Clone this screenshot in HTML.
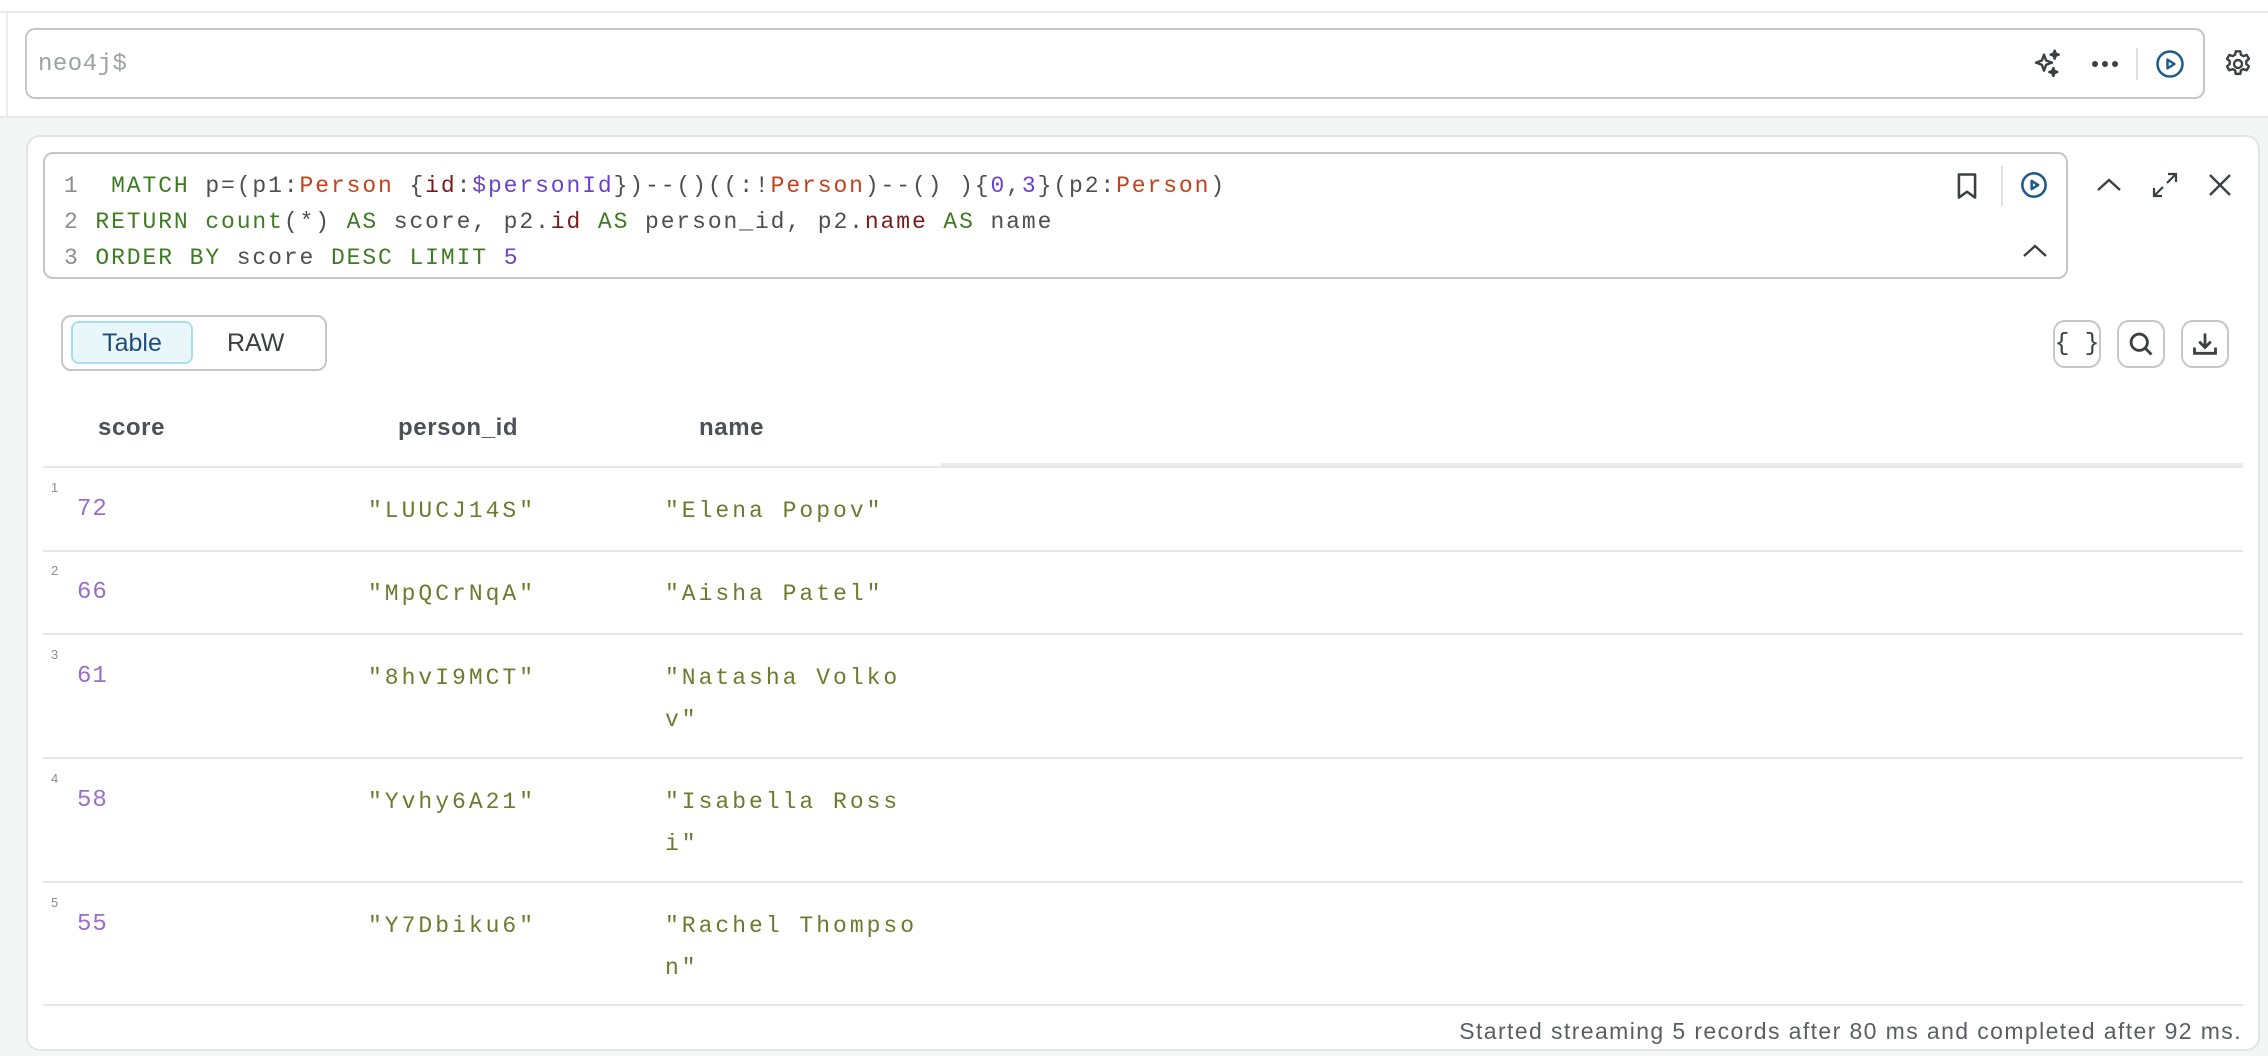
<!DOCTYPE html>
<html><head><meta charset="utf-8"><style>
*{margin:0;padding:0;box-sizing:border-box}
body{width:2268px;height:1056px;background:#fff;position:relative;overflow:hidden;font-family:"Liberation Sans",sans-serif}
.a{position:absolute}
.mono{font-family:"Liberation Mono",monospace}
.code{font-size:23px;letter-spacing:1.9px;white-space:pre;color:#4d4f53}
.k{color:#3f7a24}.l{color:#c2421c}.p{color:#7a1b1b}.v{color:#6a44c6}
.hd{font-size:24px;font-weight:bold;color:#4d5157;letter-spacing:0.6px}
.cell{font-size:23px;letter-spacing:3px;color:#6b7c2e;white-space:pre;line-height:42px}
.num{font-size:24px;letter-spacing:1px;color:#9a6fc4}
.idx{font-size:13px;color:#8a8d91}
.hr{height:2px;background:#e6e7e8}
.ib{width:48px;height:48px;border:2px solid #c4c6c9;border-radius:12px;background:#fff}
svg{position:absolute}
</style></head><body>
<div class="a" style="left:0;top:11px;width:2268px;height:2px;background:#e8e9ea"></div>
<div class="a" style="left:6px;top:13px;width:2px;height:103px;background:#ececec"></div>
<div class="a" style="left:0;top:116px;width:2268px;height:940px;background:#f4f5f5;border-top:2px solid #e8e9ea"></div>
<!-- top editor -->
<div class="a" style="left:25px;top:28px;width:2180px;height:71px;border:2px solid #c4c6c9;border-radius:10px;background:#fff"></div>
<div class="a mono" style="left:38px;top:51px;font-size:24px;letter-spacing:0.5px;color:#9ea1a5">neo4j$</div>
<svg style="left:2032px;top:48px" width="32" height="32" viewBox="0 0 24 24" fill="none" stroke="#3c4045" stroke-width="1.8" stroke-linejoin="round"><path d="M9 5l1.6 4.4L15 11l-4.4 1.6L9 17l-1.6-4.4L3 11l4.4-1.6z"/><path d="M17 2l.8 2.2L20 5l-2.2.8L17 8l-.8-2.2L14 5l2.2-.8z" fill="#3c4045"/><path d="M16 15l.8 2.2 2.2.8-2.2.8L16 21l-.8-2.2L13 18l2.2-.8z" fill="#3c4045"/></svg>
<div class="a" style="left:2092px;top:61px;width:6px;height:6px;border-radius:3px;background:#3c4045;box-shadow:10px 0 #3c4045,20px 0 #3c4045"></div>
<div class="a" style="left:2136px;top:48px;width:2px;height:32px;background:#e0e1e3"></div>
<svg style="left:2155px;top:49px" width="30" height="30" viewBox="0 0 24 24" fill="none" stroke="#1f5a8c" stroke-width="2"><circle cx="12" cy="12" r="10"/><path d="M10 8.5v7l5.5-3.5z" stroke-linejoin="round"/></svg>
<svg style="left:2222px;top:48px" width="32" height="32" viewBox="0 0 24 24" fill="none" stroke="#3c4045" stroke-width="1.8"><circle cx="12" cy="12" r="3"/><path d="M10.3 2.5h3.4l.5 2.6 1.8 1 2.5-.9 1.7 2.9-2 1.8v2.1l2 1.8-1.7 2.9-2.5-.9-1.8 1-.5 2.6h-3.4l-.5-2.6-1.8-1-2.5.9-1.7-2.9 2-1.8v-2.1l-2-1.8 1.7-2.9 2.5.9 1.8-1z" stroke-linejoin="round"/></svg>
<!-- card -->
<div class="a" style="left:26px;top:135px;width:2234px;height:916px;border:2px solid #e3e4e5;border-radius:14px;background:#fff"></div>
<div class="a" style="left:43px;top:152px;width:2025px;height:127px;border:2px solid #c4c6c9;border-radius:10px;background:#fff"></div>
<div class="a mono code" style="left:64px;top:168px;line-height:36px"><span style="color:#8a8d91">1</span>  <span class="k">MATCH</span> p=(p1:<span class="l">Person</span> {<span class="p">id</span>:<span class="v">$personId</span>})--()((:!<span class="l">Person</span>)--() ){<span class="v">0</span>,<span class="v">3</span>}(p2:<span class="l">Person</span>)
<span style="color:#8a8d91">2</span> <span class="k">RETURN</span> <span class="k">count</span>(*) <span class="k">AS</span> score, p2.<span class="p">id</span> <span class="k">AS</span> person_id, p2.<span class="p">name</span> <span class="k">AS</span> name
<span style="color:#8a8d91">3</span> <span class="k">ORDER BY</span> score <span class="k">DESC LIMIT</span> <span class="v">5</span></div>
<svg style="left:1953px;top:171px" width="28" height="30" viewBox="0 0 24 26" fill="none" stroke="#3c4045" stroke-width="2.2" stroke-linejoin="round"><path d="M5 3h14v20l-7-5-7 5z"/></svg>
<div class="a" style="left:2001px;top:166px;width:2px;height:40px;background:#e0e1e3"></div>
<svg style="left:2020px;top:171px" width="28" height="28" viewBox="0 0 24 24" fill="none" stroke="#1f5a8c" stroke-width="2.2"><circle cx="12" cy="12" r="10"/><path d="M10 8.5v7l5.5-3.5z" stroke-linejoin="round"/></svg>
<svg style="left:2022px;top:242px" width="26" height="18" viewBox="0 0 26 18" fill="none" stroke="#3c4045" stroke-width="2.4"><path d="M2 14L13 4l11 10"/></svg>
<svg style="left:2096px;top:176px" width="26" height="18" viewBox="0 0 26 18" fill="none" stroke="#3c4045" stroke-width="2.4"><path d="M2 14L13 4l11 10"/></svg>
<svg style="left:2150px;top:170px" width="30" height="30" viewBox="0 0 30 30" fill="none" stroke="#3c4045" stroke-width="2.2"><path d="M18 4h8v8M26 4L17 13M12 26H4v-8M4 26l9-9"/></svg>
<svg style="left:2207px;top:172px" width="26" height="26" viewBox="0 0 26 26" fill="none" stroke="#3c4045" stroke-width="2.4"><path d="M3 3l20 20M23 3L3 23"/></svg>
<!-- toggle -->
<div class="a" style="left:61px;top:315px;width:266px;height:56px;border:2px solid #c4c6c9;border-radius:10px"></div>
<div class="a" style="left:71px;top:321px;width:122px;height:43px;border:2px solid #a6e0ea;border-radius:8px;background:#e9f7fa"></div>
<div class="a" style="left:71px;top:329px;width:122px;text-align:center;font-size:25px;color:#1f4e7a">Table</div>
<div class="a" style="left:227px;top:329px;font-size:25px;color:#3c4045">RAW</div>
<div class="a ib" style="left:2053px;top:320px"></div>
<div class="a mono" style="left:2053px;top:329px;width:48px;text-align:center;font-size:25px;color:#3c4045">{ }</div>
<div class="a ib" style="left:2117px;top:320px"></div>
<svg style="left:2127px;top:330px" width="28" height="28" viewBox="0 0 24 24" fill="none" stroke="#3c4045" stroke-width="2.4"><circle cx="10.5" cy="10.5" r="7"/><path d="M15.5 15.5L21 21"/></svg>
<div class="a ib" style="left:2181px;top:320px"></div>
<svg style="left:2191px;top:330px" width="28" height="28" viewBox="0 0 24 24" fill="none" stroke="#3c4045" stroke-width="2.4"><path d="M12 3v12M7 10l5 5 5-5M3 15v5h18v-5"/></svg>
<!-- table -->
<div class="a hd" style="left:98px;top:414px">score</div>
<div class="a hd" style="left:398px;top:414px">person_id</div>
<div class="a hd" style="left:699px;top:414px">name</div>
<div class="a hr" style="left:43px;top:466px;width:2200px"></div>
<div class="a" style="left:941px;top:463px;width:1302px;height:3px;background:#ececec"></div>
<div class="a hr" style="left:43px;top:550px;width:2200px"></div>
<div class="a hr" style="left:43px;top:633px;width:2200px"></div>
<div class="a hr" style="left:43px;top:757px;width:2200px"></div>
<div class="a hr" style="left:43px;top:881px;width:2200px"></div>
<div class="a hr" style="left:43px;top:1004px;width:2200px"></div>

<div class="a idx" style="left:51px;top:480px">1</div><div class="a mono num" style="left:77px;top:496px">72</div>
<div class="a mono cell" style="left:368px;top:490px">"LUUCJ14S"</div><div class="a mono cell" style="left:665px;top:490px">"Elena Popov"</div>
<div class="a idx" style="left:51px;top:563px">2</div><div class="a mono num" style="left:77px;top:579px">66</div>
<div class="a mono cell" style="left:368px;top:573px">"MpQCrNqA"</div><div class="a mono cell" style="left:665px;top:573px">"Aisha Patel"</div>
<div class="a idx" style="left:51px;top:647px">3</div><div class="a mono num" style="left:77px;top:663px">61</div>
<div class="a mono cell" style="left:368px;top:657px">"8hvI9MCT"</div><div class="a mono cell" style="left:665px;top:657px">"Natasha Volko
v"</div>
<div class="a idx" style="left:51px;top:771px">4</div><div class="a mono num" style="left:77px;top:787px">58</div>
<div class="a mono cell" style="left:368px;top:781px">"Yvhy6A21"</div><div class="a mono cell" style="left:665px;top:781px">"Isabella Ross
i"</div>
<div class="a idx" style="left:51px;top:895px">5</div><div class="a mono num" style="left:77px;top:911px">55</div>
<div class="a mono cell" style="left:368px;top:905px">"Y7Dbiku6"</div><div class="a mono cell" style="left:665px;top:905px">"Rachel Thompso
n"</div>

<div class="a" style="right:26px;top:1018px;font-size:23px;letter-spacing:1.4px;color:#5a5e63">Started streaming 5 records after 80 ms and completed after 92 ms.</div>
</body></html>
